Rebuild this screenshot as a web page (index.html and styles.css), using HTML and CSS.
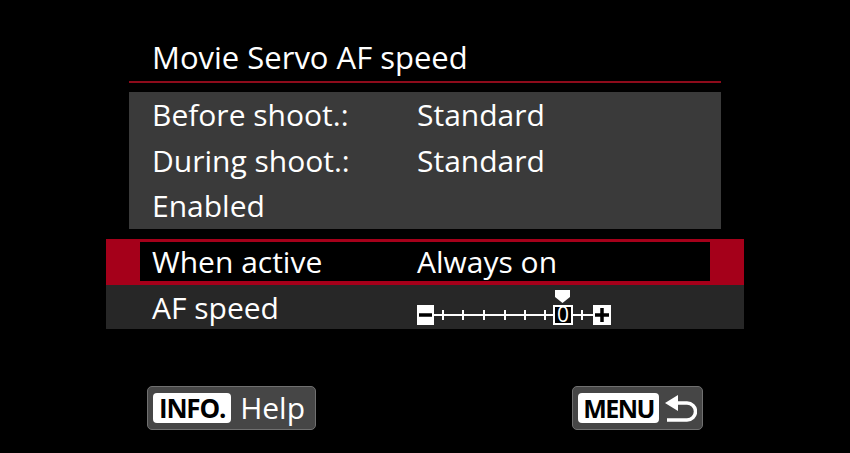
FILE: index.html
```html
<!DOCTYPE html>
<html lang="en">
<head>
    <meta charset="UTF-8">
    <title>Movie Servo AF speed</title>
    <link rel="stylesheet" href="styles.css">
</head>
<body>
    <div class="screen">
        <div class="panel">
            <h1 class="title">Movie Servo AF speed</h1>

            <div class="summary">
                <div class="row">
                    <span class="label">Before shoot.:</span>
                    <span class="value">Standard</span>
                </div>
                <div class="row">
                    <span class="label">During shoot.:</span>
                    <span class="value">Standard</span>
                </div>
                <div class="row">
                    <span class="label">Enabled</span>
                </div>
            </div>
        </div>

        <div class="options">
            <div class="option selected">
                <div class="option-inner">
                    <span class="label">When active</span>
                    <span class="value">Always on</span>
                </div>
            </div>
            <div class="option">
                <div class="option-inner">
                    <span class="label">AF speed</span>
                    <svg class="scale" width="196" height="44" viewBox="0 0 196 44">
                        <!-- pointer -->
                        <polygon points="138,5 153,5 153,12 145.5,18 138,12" fill="#fff"/>
                        <!-- track -->
                        <line x1="16" y1="30" x2="177" y2="30" stroke="#fff" stroke-width="2"/>
                        <g stroke="#fff" stroke-width="2">
                            <line x1="26" y1="25" x2="26" y2="35"/>
                            <line x1="46" y1="25" x2="46" y2="35"/>
                            <line x1="67" y1="25" x2="67" y2="35"/>
                            <line x1="88" y1="25" x2="88" y2="35"/>
                            <line x1="108" y1="25" x2="108" y2="35"/>
                            <line x1="128" y1="25" x2="128" y2="35"/>
                            <line x1="165" y1="25" x2="165" y2="35"/>
                        </g>
                        <!-- minus -->
                        <rect x="0" y="20" width="17" height="20" fill="#fff"/>
                        <line x1="2" y1="30" x2="15" y2="30" stroke="#000" stroke-width="3.5"/>
                        <!-- zero -->
                        <rect x="137" y="21" width="18" height="18" fill="#000" stroke="#fff" stroke-width="2"/>
                        <text x="146" y="37" text-anchor="middle" fill="#fff" font-family="Open Sans, sans-serif" font-size="21">0</text>
                        <!-- plus -->
                        <rect x="176" y="20" width="18" height="20" fill="#fff"/>
                        <line x1="178" y1="30" x2="192" y2="30" stroke="#000" stroke-width="3.5"/>
                        <line x1="185" y1="23" x2="185" y2="37" stroke="#000" stroke-width="3.5"/>
                    </svg>
                </div>
            </div>
        </div>

        <div class="footer">
            <div class="key">
                <span class="key-label">INFO.</span>
                <span class="key-text">Help</span>
            </div>
            <div class="key">
                <span class="key-label menu">MENU</span>
                <svg class="return-icon" width="34" height="30" viewBox="0 0 34 30">
                    <polygon points="2,10 15,2 15,18" fill="#fff"/>
                    <path d="M14 10 H24 A8.5 8.5 0 0 1 24 27 H4" fill="none" stroke="#fff" stroke-width="3.5"/>
                </svg>
            </div>
        </div>
    </div>
</body>
</html>
```

FILE: styles.css
```css
* {
    margin: 0;
    padding: 0;
    box-sizing: border-box;
}

body {
    background-color: #000;
    color: #fff;
    font-family: 'Open Sans', 'Noto Sans', sans-serif;
    font-size: 30px;
}

.screen {
    width: 850px;
    height: 453px;
    overflow: hidden;
}

.panel {
    margin-left: 129px;
    width: 592px;
}

.title {
    font-size: 31px;
    font-weight: 400;
    line-height: 40px;
    padding: 37px 0 4px 23px;
    border-bottom: 2px solid #8e0b1b;
}

.summary {
    margin-top: 9px;
    background-color: #3a3a3a;
    padding-left: 23px;
}

.row {
    display: flex;
    align-items: center;
    height: 45.7px;
    line-height: 46px;
}

.label {
    width: 265px;
    flex-shrink: 0;
}

.options {
    margin: 10px 0 0 106px;
    width: 638px;
}

.option {
    height: 44px;
    background-color: #272727;
}

.option .option-inner {
    display: flex;
    align-items: center;
    height: 100%;
    padding-left: 46px;
}

.option.selected {
    height: 46px;
    background-color: #a5001a;
    padding: 3px 34px 4px;
}

.option.selected .option-inner {
    background-color: #000;
    padding-left: 12px;
}

.scale {
    display: block;
}

.footer {
    display: flex;
    justify-content: space-between;
    padding: 0 147px;
    margin-top: 57px;
}

.key {
    display: flex;
    align-items: center;
    gap: 9px;
    height: 44px;
    padding: 0 10px 0 5px;
    background-color: #464646;
    border: 1.5px solid #707070;
    border-radius: 5px;
}

.key:last-child {
    gap: 4px;
    padding-right: 5px;
}

.key-label {
    display: flex;
    align-items: center;
    justify-content: center;
    height: 30px;
    padding: 0 6px;
    background-color: #fff;
    color: #000;
    border-radius: 4px;
    font-size: 26px;
    font-weight: 700;
    letter-spacing: -1.2px;
}

.key-label.menu {
    font-size: 25px;
    letter-spacing: -1.5px;
    padding: 0 5px;
}

.key-text {
    font-size: 30px;
    line-height: 1;
}

.return-icon {
    display: block;
}
```
